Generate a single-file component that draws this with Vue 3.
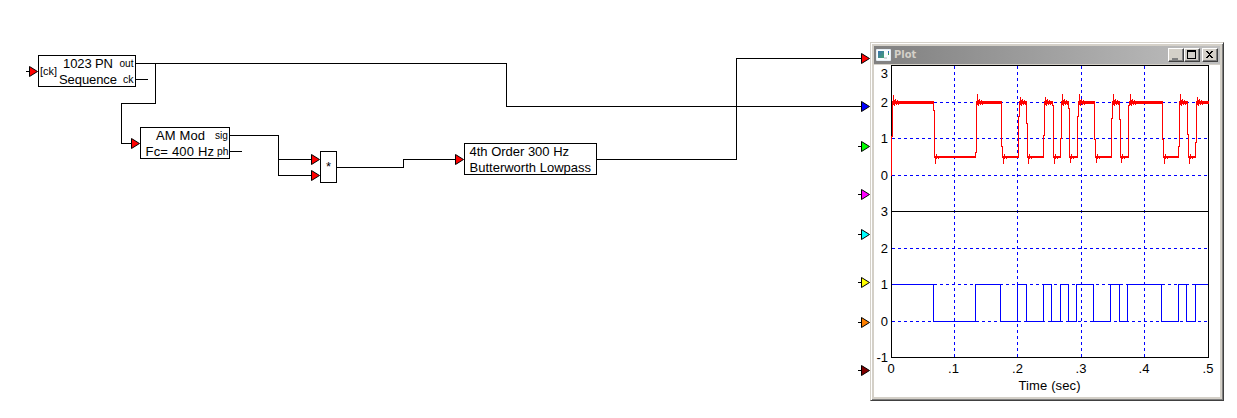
<script setup>
const wires = [
  'M136 63.5H506.5V106.5H861',
  'M155.5 63V103.5H121.5V143.5H131',
  'M136 79.5H148',
  'M26 71.5H29',
  'M230 135.5H278.5V175.5H311',
  'M278 159.5H311',
  'M230 151.5H242',
  'M337 167.5H403.5V159.5H455',
  'M597 159.5H736.5V58.5H861',
]

const blocks = [
  { x: 38, y: 55, w: 98, h: 32 },
  { x: 140, y: 127, w: 90, h: 32 },
  { x: 320, y: 151, w: 17, h: 32 },
  { x: 464, y: 143, w: 133, h: 32 },
]

const labels = [
  { t: '1023 PN', x: 63, y: 68, w: 50 },
  { t: 'Sequence', x: 59, y: 84, w: 58 },
  { t: 'AM Mod', x: 156, y: 140, w: 49 },
  { t: 'Fc= 400 Hz', x: 145.5, y: 156, w: 68.5 },
  { t: '4th Order 300 Hz', x: 469.5, y: 156, w: 99.5 },
  { t: 'Butterworth Lowpass', x: 469.5, y: 172, w: 121.5 },
]

const pinLabels = [
  { t: '[ck]', x: 40, y: 75, w: 17 },
  { t: 'out', x: 119.5, y: 67, w: 14 },
  { t: 'ck', x: 123, y: 83, w: 10.5 },
  { t: 'sig', x: 215, y: 139, w: 13 },
  { t: 'ph', x: 217, y: 155, w: 11.5 },
]

const arrows = [
  { x: 29, y: 71, c: '#f00' },
  { x: 131, y: 143, c: '#f00' },
  { x: 311, y: 159, c: '#f00' },
  { x: 311, y: 175, c: '#f00' },
  { x: 455, y: 159, c: '#f00' },
]

const inputs = [
  { y: 58, c: '#f00' },
  { y: 106, c: '#00f' },
  { y: 146, c: '#0f0' },
  { y: 194, c: '#f0f' },
  { y: 234, c: '#0ff' },
  { y: 282, c: '#ff0' },
  { y: 322, c: '#ff8000' },
  { y: 370, c: '#800000' },
]
arrows.push(...inputs.map((i) => ({ x: 861, ...i })))

const arrowPath = (a) => `M${a.x + 0.5} ${a.y - 4.5}L${a.x + 8.5} ${a.y + 0.5}L${a.x + 0.5} ${a.y + 5.5}Z`

const gridX = [954, 1017, 1081, 1144]
const gridY = [102, 138, 175, 248, 284, 321]

const yLabels = [['3', 78], ['2', 107], ['1', 143], ['0', 180], ['3', 216], ['2', 253], ['1', 289], ['0', 326], ['-1', 362]]
const xLabels = [['0', 891], ['.1', 953.5], ['.2', 1017.5], ['.3', 1081], ['.4', 1144], ['.5', 1208]]

// Bit sequence: level toggles at each x, starting high
const toggles = [933, 975, 1000, 1017, 1026, 1043, 1051, 1060, 1068, 1076, 1093, 1110, 1119, 1127, 1161, 1178, 1186, 1195]
const bits = toggles.reduce((d, x, i) => d + `H${x + 0.5}V${i % 2 ? 284.5 : 321.5}`, 'M892 284.5') + 'H1208'

// Filtered signal edges: [x, level at the half-way column, overshoot extreme]
const edges = [
  [891, 136, 95], [933, 110, 163], [975, 152, 94], [1001, 146, 163], [1018, 116, 97], [1026, 123, 163],
  [1043, 135, 97], [1052, 105, 163], [1060, 138, 94], [1068, 108, 162], [1077, 116, 94], [1094, 139, 162],
  [1111, 118, 94], [1119, 119, 162], [1128, 105, 94], [1162, 139, 163], [1178, 146, 94], [1187, 134, 163],
  [1195, 142, 97],
]
const col = (x, top, bottom) => `M${x} ${top}h1V${bottom}h-1Z`
const riseRing = [[100, 106], [99, 104], [101, 105], [100, 104], [101, 105], [101, 104]]
const fallRing = [[154, 159], [156, 158], [156, 159]]
const filtered = edges
  .map(([x, mid, peak], i) => {
    const rising = i % 2 === 0
    const end = edges[i + 1]?.[0] ?? 1208
    const p = x + 2
    const ring = (rising ? riseRing : fallRing)
      .map(([a, b], k) => [p + 1 + k, a, b])
      .filter(([cx]) => cx < end)
      .map((c) => col(...c))
      .join('')
    if (rising) {
      return col(x, mid, i ? 158 : 176) + col(x + 1, 101, mid + 1) + col(p, peak, 105) + ring +
        `M${x + 1} 101H${end + 1}V104H${x + 1}Z`
    }
    return col(x, 101, mid + 1) + col(x + 1, mid, 158) + col(p, 156, peak + 1) + ring +
      `M${x + 1} 156H${end + 1}V158H${x + 1}Z`
  })
  .join('')
</script>

<template>
  <main class="canvas">
    <svg class="diagram" width="1237" height="418" viewBox="0 0 1237 418">
      <path v-for="d in wires" :key="d" :d="d" class="line" />
      <path v-for="i in inputs" :key="i.y" :d="`M858 ${i.y + 0.5}H861`" class="line" />
      <rect v-for="b in blocks" :key="b.x" :x="b.x + 0.5" :y="b.y + 0.5" :width="b.w - 1" :height="b.h - 1" class="block" />
      <path v-for="a in arrows" :key="`${a.x}-${a.y}`" :d="arrowPath(a)" :fill="a.c" class="arrow" />
      <text v-for="l in labels" :key="l.t" :x="l.x" :y="l.y" :textLength="l.w" class="label">{{ l.t }}</text>
      <text v-for="l in pinLabels" :key="l.t + l.y" :x="l.x" :y="l.y" :textLength="l.w" lengthAdjust="spacingAndGlyphs" class="pin">{{ l.t }}</text>
      <text x="328.5" y="171" text-anchor="middle" class="label">*</text>
    </svg>

    <section class="window">
      <header class="caption">
        <svg class="app-icon" width="15" height="12" viewBox="0 0 15 12">
          <defs>
            <linearGradient id="pane" x1="0" y1="0" x2="1" y2="1">
              <stop offset="0" stop-color="#3b72b0" />
              <stop offset="1" stop-color="#45a070" />
            </linearGradient>
          </defs>
          <rect width="15" height="12" rx="1" fill="#e6eef5" />
          <rect x="1" y="1" width="13" height="10" fill="#fbfdfe" />
          <rect x="2" y="2" width="6" height="7" fill="url(#pane)" />
          <rect x="12" y="2" width="1" height="2" fill="#3468c0" />
          <rect x="12" y="4" width="1" height="2" fill="#3b9c58" />
          <rect x="8" y="8" width="3" height="2" fill="#d4d8dc" />
        </svg>
        <span class="title">Plot</span>
        <button class="ctl"><svg width="14" height="12"><rect x="3" y="9" width="6" height="2" fill="#808080" /></svg></button>
        <button class="ctl"><svg width="14" height="12"><path d="M2 1H11V10H2ZM3 3V9H10V3Z" fill-rule="evenodd" /></svg></button>
        <button class="ctl close"><svg width="14" height="12"><path d="M3 2h2v1h1v1h1v-1h1v-1h2v1h-1v1h-1v1h-1v1h1v1h1v1h1v1h-2v-1h-1v-1h-1v1h-1v1h-2v-1h1v-1h1v-1h1v-1h-1v-1h-1v-1h-1z" /></svg></button>
      </header>
      <svg class="plot" width="346" height="332" viewBox="874 65 346 332">
        <path v-for="x in gridX" :key="x" :d="`M${x + 0.5} 66V357`" class="grid" />
        <path v-for="y in gridY" :key="y" :d="`M892 ${y + 0.5}H1208`" class="grid" />
        <path d="M891.5 65.5H1208.5V357.5H891.5ZM891 211.5H1208" class="line" />
        <path :d="bits" class="bits" />
        <path :d="filtered" class="filtered" />
        <text v-for="[t, y] in yLabels" :key="y" x="888" :y="y" text-anchor="end" class="label">{{ t }}</text>
        <text v-for="[t, x] in xLabels" :key="x" :x="x" y="373" text-anchor="middle" class="label">{{ t }}</text>
        <text x="1018.5" y="390" textLength="62" class="label">Time (sec)</text>
      </svg>
    </section>
  </main>
</template>

<style scoped>
.canvas {
  position: relative;
  width: 1237px;
  height: 418px;
  overflow: hidden;
  background: #fff;
  font-family: "Liberation Sans", Arial, sans-serif;
}
.diagram,
.plot {
  display: block;
}
.line,
.bits,
.grid {
  fill: none;
  stroke: #000;
  stroke-width: 1;
  shape-rendering: crispEdges;
}
.bits {
  stroke: #00f;
}
.grid {
  stroke: #00f;
  stroke-dasharray: 3 3;
}
.filtered {
  fill: #f00;
  shape-rendering: crispEdges;
}
.block {
  fill: #fff;
  stroke: #000;
  shape-rendering: crispEdges;
}
.arrow {
  stroke: #000;
  stroke-width: 1;
}
.label {
  font-size: 13px;
}
.pin {
  font-size: 10px;
}
.window {
  position: absolute;
  left: 870px;
  top: 42px;
  box-sizing: border-box;
  width: 354px;
  height: 359px;
  padding: 2px;
  border: 1px solid;
  border-color: #d4d0c8 #404040 #404040 #d4d0c8;
  background: #fff;
  box-shadow: inset 1px 1px #fff, inset -1px -1px #808080, inset 0 0 0 3px #d4d0c8;
}
.caption {
  display: flex;
  align-items: center;
  box-sizing: border-box;
  height: 19px;
  margin: 1px 1px 0;
  padding: 0 2px;
  border-bottom: 1px solid #d4d0c8;
  background: linear-gradient(90deg, #808080, #c0c0c0);
}
.plot {
  margin: 0 1px;
}
.app-icon {
  margin-right: 3px;
}
.title {
  flex: 1;
  color: #d4d0c8;
  font: bold 11px/18px "DejaVu Sans Condensed", "DejaVu Sans", sans-serif;
}
.ctl {
  box-sizing: border-box;
  width: 16px;
  height: 14px;
  padding: 0;
  border: 1px solid;
  border-color: #fff #404040 #404040 #fff;
  background: #d4d0c8;
  box-shadow: inset -1px -1px #808080;
}
.ctl svg {
  display: block;
  shape-rendering: crispEdges;
}
.close {
  margin-left: 2px;
}
</style>
